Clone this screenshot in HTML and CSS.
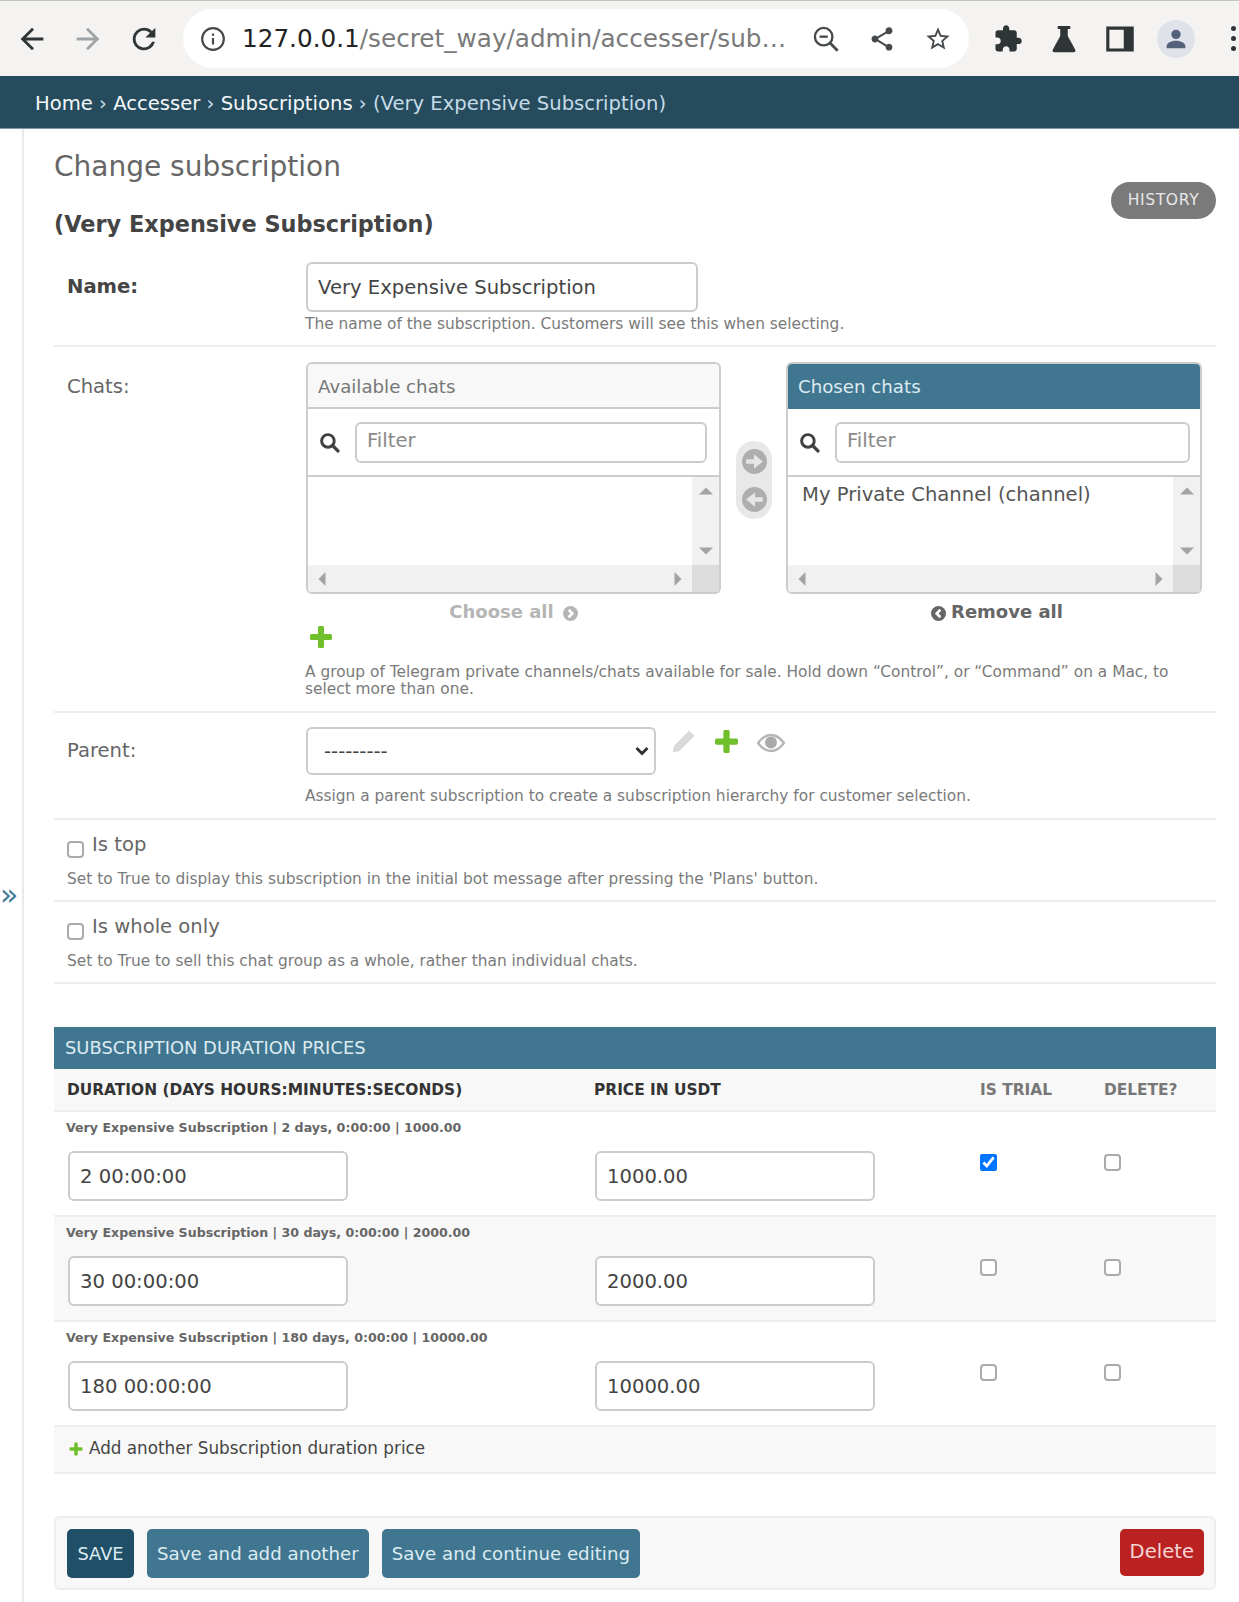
FILE: index.html
```html
<!DOCTYPE html>
<html lang="en">
<head>
  <meta charset="UTF-8" />
  <title>Change subscription</title>
  <link rel="stylesheet" href="styles.css">
</head>
<body>
  <svg class="defs" width="0" height="0" aria-hidden="true">
    <symbol id="plus" viewBox="0 0 24 24"><path d="M9 2.500q0-1.500 1.500-1.500h3q1.500 0 1.500 1.500V9h6.500q1.500 0 1.500 1.500v3q0 1.500-1.500 1.500H15v6.500q0 1.500-1.500 1.500h-3q-1.500 0-1.500-1.500V15H2.500Q1 15 1 13.500v-3Q1 9 2.500 9H9z" fill="#70bf2b"/></symbol>
    <symbol id="search" viewBox="0 0 20 20"><circle cx="8.500" cy="8.500" r="6" fill="none" stroke="#40403e" stroke-width="2.800"/><path d="M13 13l5 5" stroke="#40403e" stroke-width="3.200" stroke-linecap="round"/></symbol>
    <symbol id="circle-right" viewBox="0 0 24 24"><circle cx="12" cy="12" r="12" fill="#aeaeae"/><path d="M4 9.800h7.500V5L20 12l-8.500 7v-4.800H4z" fill="#e6e6e6"/></symbol>
    <symbol id="circle-left" viewBox="0 0 24 24"><circle cx="12" cy="12" r="12" fill="#aeaeae"/><path d="M20 9.800h-7.500V5L4 12l8.500 7v-4.800H20z" fill="#e6e6e6"/></symbol>
    <symbol id="chev-right" viewBox="0 0 24 24"><circle cx="12" cy="12" r="12" fill="currentColor"/><path d="M9 6l6 6-6 6" fill="none" stroke="#fff" stroke-width="4"/></symbol>
    <symbol id="chev-left" viewBox="0 0 24 24"><circle cx="12" cy="12" r="12" fill="currentColor"/><path d="M15 6l-6 6 6 6" fill="none" stroke="#fff" stroke-width="4"/></symbol>
    <symbol id="arrow-up" viewBox="0 0 12 12"><path d="M0 9L6 3l6 6z" fill="#a3a3a3"/></symbol>
    <symbol id="arrow-down" viewBox="0 0 12 12"><path d="M0 3l6 6 6-6z" fill="#a3a3a3"/></symbol>
    <symbol id="arrow-left" viewBox="0 0 12 12"><path d="M9 0L3 6l6 6z" fill="#a3a3a3"/></symbol>
    <symbol id="arrow-right" viewBox="0 0 12 12"><path d="M3 0l6 6-6 6z" fill="#a3a3a3"/></symbol>
  </svg>

  <header class="toolbar">
    <svg class="tb-icon" viewBox="0 0 24 24"><path d="M20 11H7.830l5.590-5.590L12 4l-8 8 8 8 1.410-1.410L7.830 13H20z" fill="#2f3437"/></svg>
    <svg class="tb-icon" viewBox="0 0 24 24"><path d="M4 11h12.170l-5.590-5.590L12 4l8 8-8 8-1.410-1.410L16.170 13H4z" fill="#a0a3a6"/></svg>
    <svg class="tb-icon" viewBox="0 0 24 24"><path d="M17.650 6.350A7.950 7.950 0 0 0 12 4a8 8 0 1 0 7.740 10h-2.080A6 6 0 1 1 12 6c1.660 0 3.140.69 4.220 1.780L13 11h7V4z" fill="#2f3437"/></svg>
    <div class="omnibox">
      <svg class="info-icon" viewBox="0 0 24 24"><circle cx="12" cy="12" r="10" fill="none" stroke="#45494c" stroke-width="2"/><path d="M11 11h2v6h-2zM11 7h2v2h-2z" fill="#45494c"/></svg>
      <span class="url"><b>127.0.0.1</b>/secret_way/admin/accesser/sub…</span>
      <svg class="om-icon" viewBox="0 0 24 24"><circle cx="10" cy="10" r="7.500" fill="none" stroke="#45494c" stroke-width="2"/><path d="M15.500 15.500L22 22" stroke="#45494c" stroke-width="2.400"/><path d="M6.500 9h7v2h-7z" fill="#45494c"/></svg>
      <svg class="om-icon" viewBox="0 0 24 24"><path d="M18 16.080c-.76 0-1.440.3-1.960.77L8.910 12.700c.05-.23.09-.46.09-.7s-.04-.47-.09-.7l7.050-4.110c.54.5 1.250.81 2.040.81 1.660 0 3-1.340 3-3s-1.340-3-3-3-3 1.340-3 3c0 .24.04.47.09.7L8.040 9.810C7.500 9.310 6.790 9 6 9c-1.660 0-3 1.340-3 3s1.340 3 3 3c.79 0 1.500-.31 2.040-.81l7.120 4.160c-.05.21-.08.43-.08.65 0 1.610 1.310 2.920 2.920 2.920s2.920-1.310 2.920-2.920-1.310-2.920-2.920-2.920z" fill="#45494c"/></svg>
      <svg class="om-icon" viewBox="0 0 24 24"><path d="M22 9.240l-7.190-.62L12 2 9.190 8.630 2 9.240l5.460 4.730L5.820 21 12 17.270 18.180 21l-1.630-7.030L22 9.240zM12 15.400l-3.760 2.270 1-4.280-3.320-2.880 4.380-.38L12 6.100l1.710 4.040 4.380.38-3.320 2.880 1 4.280L12 15.400z" fill="#45494c"/></svg>
    </div>
    <div class="tb-right">
      <svg viewBox="0 0 24 24"><path d="M20.500 11H19V7c0-1.100-.9-2-2-2h-4V3.500C13 2.120 11.880 1 10.500 1S8 2.120 8 3.500V5H4c-1.100 0-1.990.9-1.990 2v3.800H3.500c1.490 0 2.700 1.210 2.700 2.700s-1.210 2.700-2.700 2.700H2V20c0 1.100.9 2 2 2h3.800v-1.500c0-1.490 1.210-2.700 2.700-2.700 1.490 0 2.700 1.210 2.700 2.700V22H17c1.100 0 2-.9 2-2v-4h1.500c1.380 0 2.500-1.120 2.500-2.500S21.880 11 20.500 11z" fill="#2f3437"/></svg>
      <svg viewBox="0 0 24 24"><path d="M7 1.500h10v2.500h-2v5.500l6 11q.6 2-1.500 2h-15q-2.100 0-1.500-2l6-11V4H7z" fill="#2f3437"/></svg>
      <svg viewBox="0 0 24 24"><path d="M1 2h22v20H1zM3.500 4.500v15H15v-15z" fill="#2f3437" fill-rule="evenodd"/></svg>
      <span class="avatar"><svg viewBox="0 0 24 24"><circle cx="12" cy="8" r="4" fill="#53627a"/><path d="M4 20v-2c0-3 5-4.500 8-4.500s8 1.500 8 4.500v2z" fill="#53627a"/></svg></span>
      <span class="dots"><i></i><i></i><i></i></span>
    </div>
  </header>

  <nav class="breadcrumbs">
    <a>Home</a> › <a>Accesser</a> › <a>Subscriptions</a> › (Very Expensive Subscription)
  </nav>

  <div class="layout">
    <div class="nav-toggle">»</div>
    <main class="content">
      <div class="page-head">
        <div>
          <h1>Change subscription</h1>
          <h2>(Very Expensive Subscription)</h2>
        </div>
        <a class="history">HISTORY</a>
      </div>

      <div class="form-row name-row">
        <label class="field-label required">Name:</label>
        <div class="field-box">
          <input class="text-input name-input" value="Very Expensive Subscription">
          <div class="help">The name of the subscription. Customers will see this when selecting.</div>
        </div>
      </div>

      <div class="form-row chats-row">
        <label class="field-label">Chats:</label>
        <div class="field-box">
          <div class="selector">
            <div class="sel-box">
              <div class="sel-title">Available chats</div>
              <div class="sel-filter">
                <svg class="sel-search"><use href="#search"/></svg>
                <input class="text-input filter-input" placeholder="Filter">
              </div>
              <div class="sel-list">
                <div class="sel-items"></div>
                <div class="vscroll"><svg><use href="#arrow-up"/></svg><svg><use href="#arrow-down"/></svg></div>
                <div class="hscroll"><svg><use href="#arrow-left"/></svg><svg><use href="#arrow-right"/></svg></div>
                <div class="corner"></div>
              </div>
            </div>
            <div class="sel-move">
              <svg><use href="#circle-right"/></svg>
              <svg><use href="#circle-left"/></svg>
            </div>
            <div class="sel-box chosen">
              <div class="sel-title">Chosen chats</div>
              <div class="sel-filter">
                <svg class="sel-search"><use href="#search"/></svg>
                <input class="text-input filter-input" placeholder="Filter">
              </div>
              <div class="sel-list">
                <div class="sel-items">My Private Channel (channel)</div>
                <div class="vscroll"><svg><use href="#arrow-up"/></svg><svg><use href="#arrow-down"/></svg></div>
                <div class="hscroll"><svg><use href="#arrow-left"/></svg><svg><use href="#arrow-right"/></svg></div>
                <div class="corner"></div>
              </div>
            </div>
          </div>
          <div class="sel-actions">
            <a class="choose-all">Choose all<svg viewBox="0 0 24 24"><use href="#chev-right"/></svg></a>
            <a class="remove-all"><svg viewBox="0 0 24 24"><use href="#chev-left"/></svg>Remove all</a>
          </div>
          <svg class="add-icon"><use href="#plus"/></svg>
          <div class="help chats-help">A group of Telegram private channels/chats available for sale. Hold down “Control”, or “Command” on a Mac, to select more than one.</div>
        </div>
      </div>

      <div class="form-row parent-row">
        <label class="field-label">Parent:</label>
        <div class="field-box">
          <div class="parent-wrap">
            <div class="parent-select">---------<svg viewBox="0 0 16 16"><path d="M2.500 5L8 10.500 13.500 5" fill="none" stroke="#2f2f2f" stroke-width="2.800"/></svg></div>
            <div class="related">
              <svg viewBox="0 0 24 24"><path d="M17.500 1.500l5 5L8 21l-6.500 1.500L3 16z" fill="#d9d9d9"/></svg>
              <svg viewBox="0 0 24 24"><use href="#plus"/></svg>
              <svg class="eye" viewBox="0 0 28 20"><path d="M1 10Q7 2 14 2t13 8q-6 8-13 8T1 10z" fill="none" stroke="#b5b5b5" stroke-width="2.400"/><circle cx="14" cy="9.500" r="6" fill="#aaa"/></svg>
            </div>
          </div>
          <div class="help parent-help">Assign a parent subscription to create a subscription hierarchy for customer selection.</div>
        </div>
      </div>

      <div class="form-row check-row">
        <div class="check-line"><input type="checkbox"><label>Is top</label></div>
        <div class="help check-help">Set to True to display this subscription in the initial bot message after pressing the 'Plans' button.</div>
      </div>

      <div class="form-row check-row">
        <div class="check-line"><input type="checkbox"><label>Is whole only</label></div>
        <div class="help check-help">Set to True to sell this chat group as a whole, rather than individual chats.</div>
      </div>

      <section class="inline-group">
        <h2 class="inline-title">SUBSCRIPTION DURATION PRICES</h2>
        <table class="prices">
          <thead>
            <tr>
              <th class="col-duration">DURATION (DAYS HOURS:MINUTES:SECONDS)</th>
              <th class="col-price">PRICE IN USDT</th>
              <th class="col-trial">IS TRIAL</th>
              <th class="col-delete">DELETE?</th>
            </tr>
          </thead>
          <tbody>
            <tr class="row-label"><td colspan="4">Very Expensive Subscription | 2 days, 0:00:00 | 1000.00</td></tr>
            <tr class="row-fields">
              <td><input class="text-input cell-input" value="2 00:00:00"></td>
              <td><input class="text-input cell-input" value="1000.00"></td>
              <td><input type="checkbox" checked></td>
              <td><input type="checkbox"></td>
            </tr>
            <tr class="row-label alt"><td colspan="4">Very Expensive Subscription | 30 days, 0:00:00 | 2000.00</td></tr>
            <tr class="row-fields alt">
              <td><input class="text-input cell-input" value="30 00:00:00"></td>
              <td><input class="text-input cell-input" value="2000.00"></td>
              <td><input type="checkbox"></td>
              <td><input type="checkbox"></td>
            </tr>
            <tr class="row-label"><td colspan="4">Very Expensive Subscription | 180 days, 0:00:00 | 10000.00</td></tr>
            <tr class="row-fields">
              <td><input class="text-input cell-input" value="180 00:00:00"></td>
              <td><input class="text-input cell-input" value="10000.00"></td>
              <td><input type="checkbox"></td>
              <td><input type="checkbox"></td>
            </tr>
            <tr class="add-row">
              <td colspan="4"><svg><use href="#plus"/></svg>Add another Subscription duration price</td>
            </tr>
          </tbody>
        </table>
      </section>

      <div class="submit-row">
        <a class="btn btn-default">SAVE</a>
        <a class="btn">Save and add another</a>
        <a class="btn">Save and continue editing</a>
        <a class="btn btn-delete">Delete</a>
      </div>
    </main>
  </div>
</body>
</html>
```
FILE: styles.css
```css
* {
  box-sizing: border-box;
}
html, body {
  margin: 0;
  padding: 0;
}
body {
  height: 1602px;
  overflow: hidden;
  background: #fff;
  color: #444;
  font-family: "DejaVu Sans", sans-serif;
  font-size: 19.6px;
}
.defs {
  position: absolute;
}
h1, h2 {
  margin: 0;
}

/* browser bar */
.toolbar {
  height: 76px;
  display: flex;
  align-items: center;
  background: #f4f3f1;
  padding: 0 0 0 15px;
  border-top: 1px solid #c4c4c2;
}
.tb-icon {
  width: 34px;
  height: 34px;
  flex: none;
  margin-right: 22px;
}
.omnibox {
  width: 786px;
  height: 59px;
  border-radius: 30px;
  background: #fff;
  display: flex;
  align-items: center;
  padding: 0 0 0 17px;
  flex: none;
}
.info-icon {
  width: 26px;
  height: 26px;
  flex: none;
  margin-right: 16px;
}
.om-icon {
  width: 28px;
  height: 28px;
  flex: none;
  margin-right: 28px;
}
.om-icon:last-child {
  margin-right: 0;
}
.url {
  font-size: 24.7px;
  color: #7a7a7a;
  width: 570px;
  white-space: nowrap;
  overflow: hidden;
  flex: none;
}
.url b {
  font-weight: normal;
  color: #222;
}
.tb-right {
  display: flex;
  align-items: center;
  margin-left: 24px;
}
.tb-right > svg {
  width: 30px;
  height: 30px;
  flex: none;
  margin-right: 26px;
}
.avatar {
  width: 38px;
  height: 38px;
  border-radius: 50%;
  background: #dfe2e8;
  display: flex;
  align-items: center;
  justify-content: center;
  margin-left: -4px;
}
.avatar svg {
  width: 28px;
  height: 28px;
}
.dots {
  display: flex;
  flex-direction: column;
  gap: 5px;
  margin-left: 36px;
}
.dots i {
  width: 5px;
  height: 5px;
  border-radius: 50%;
  background: #2f3437;
}

.breadcrumbs {
  height: 53px;
  line-height: 55px;
  background: #264b5d;
  color: #c4dce8;
  padding-left: 35px;
  white-space: nowrap;
  border-bottom: 1px solid #7d9aa8;
  overflow: hidden;
}
.breadcrumbs a {
  color: #f4f8fa;
}

.layout {
  display: flex;
}
.nav-toggle {
  width: 24px;
  height: 1473px;
  flex: none;
  border-right: 2px solid #eaeaea;
  color: #447e9b;
  font-size: 30px;
  padding-top: 751px;
  line-height: 1;
}
.content {
  flex: 1;
  padding: 0 23px 0 30px;
  min-width: 0;
}

.page-head {
  height: 118px;
  display: flex;
  justify-content: space-between;
  align-items: flex-start;
}
.page-head h1 {
  font-size: 28px;
  font-weight: normal;
  color: #666;
  line-height: 32px;
  margin-top: 22px;
}
.page-head h2 {
  font-size: 22.4px;
  font-weight: bold;
  color: #444;
  line-height: 28px;
  margin-top: 27px;
}
.history {
  margin-top: 53px;
  width: 105px;
  height: 37px;
  line-height: 37px;
  text-align: center;
  border-radius: 19px;
  background: #7a7a7a;
  color: #e8e8e8;
  font-size: 15.6px;
  letter-spacing: 0.6px;
}

/* form rows */
.form-row {
  display: flex;
  padding: 15px 13px 0;
  border-bottom: 2px solid #eee;
}
.name-row {
  height: 100px;
}
.field-label {
  width: 239px;
  flex: none;
  color: #666;
  line-height: 28px;
  padding-top: 11px;
}
.field-label.required {
  color: #444;
  font-weight: bold;
  padding-top: 11px;
}
.parent-row .field-label {
  padding-top: 10px;
}
.field-box {
  flex: 1;
  min-width: 0;
}
.text-input {
  border: 2px solid #ccc;
  border-radius: 6px;
  background: #fff;
  font-family: inherit;
  font-size: 19.6px;
  color: #444;
  padding: 0 10px;
  outline: none;
}
.text-input::placeholder {
  color: #8a8a8a;
  opacity: 1;
}
.name-input {
  width: 392px;
  height: 50px;
  display: block;
}
.help {
  color: #7a7a7a;
  font-size: 15.4px;
  line-height: 18px;
  margin-left: -1px;
}
.name-row .help {
  padding-top: 3px;
}

/* chats selector */
.chats-row {
  height: 366px;
}
.selector {
  display: flex;
  align-items: flex-start;
}
.sel-box {
  width: 415px;
  height: 232px;
  border: 2px solid #ccc;
  border-radius: 6px;
  overflow: hidden;
  flex: none;
  display: flex;
  flex-direction: column;
}
.sel-title {
  height: 45px;
  line-height: 46px;
  background: #f8f8f8;
  border-bottom: 2px solid #ccc;
  color: #777;
  padding-left: 10px;
  font-size: 18.2px;
  flex: none;
}
.chosen {
  width: 416px;
}
.chosen .sel-title {
  background: #417690;
  border-bottom-color: #417690;
  color: #dcebf2;
}
.sel-filter {
  height: 68px;
  display: flex;
  align-items: center;
  padding-left: 11px;
  border-bottom: 2px solid #ccc;
  flex: none;
}
.sel-search {
  width: 21px;
  height: 21px;
  flex: none;
  margin-right: 15px;
}
.filter-input {
  width: 352px;
  height: 41px;
  display: block;
  padding-bottom: 3px;
}
.chosen .filter-input {
  width: 355px;
}
.sel-list {
  flex: 1;
  display: grid;
  grid-template-columns: 1fr 27px;
  grid-template-rows: 1fr 27px;
  min-height: 0;
}
.sel-items {
  padding: 5px 14px;
  line-height: 26px;
  color: #555;
  white-space: nowrap;
}
.vscroll {
  background: #f1f1f1;
  display: flex;
  flex-direction: column;
  justify-content: space-between;
  align-items: center;
  padding: 7px 0;
}
.vscroll svg, .hscroll svg {
  width: 14px;
  height: 14px;
}
.hscroll {
  background: #f1f1f1;
  display: flex;
  justify-content: space-between;
  align-items: center;
  padding: 0 7px;
}
.corner {
  background: #dcdcdc;
}
.sel-move {
  width: 36px;
  height: 78px;
  margin: 79px 14px 0 15px;
  flex: none;
  border-radius: 18px;
  background: #e8e8e8;
  display: flex;
  flex-direction: column;
  align-items: center;
  justify-content: center;
  gap: 13px;
}
.sel-move svg {
  width: 25px;
  height: 25px;
}
.sel-actions {
  display: flex;
  font-size: 18px;
  font-weight: bold;
  height: 36px;
  line-height: 36px;
}
.sel-actions svg {
  width: 15px;
  height: 15px;
  vertical-align: -3px;
}
.choose-all {
  width: 415px;
  text-align: center;
  color: #b5b5b5;
  flex: none;
}
.choose-all svg {
  margin-left: 9px;
}
.remove-all {
  width: 416px;
  margin-left: 68px;
  text-align: center;
  color: #666;
  flex: none;
}
.remove-all svg {
  margin-right: 5px;
}
.add-icon {
  display: block;
  width: 24px;
  height: 24px;
  margin: -5px 0 0 3px;
}
.chats-help {
  margin-top: 15px;
  line-height: 17px;
}

/* parent */
.parent-row {
  height: 107px;
  padding-top: 14px;
}
.parent-wrap {
  display: flex;
  align-items: flex-start;
}
.parent-select {
  width: 350px;
  height: 48px;
  border: 2px solid #ccc;
  border-radius: 6px;
  display: flex;
  align-items: center;
  justify-content: space-between;
  padding: 0 4px 0 16px;
  color: #444;
  flex: none;
}
.parent-select svg {
  width: 16px;
  height: 16px;
}
.related {
  display: flex;
  align-items: center;
  gap: 18px;
  margin-left: 15px;
  padding-top: 2px;
}
.related svg {
  width: 25px;
  height: 25px;
}
.related .eye {
  width: 28px;
  height: 22px;
  margin-top: 2px;
}
.parent-help {
  margin-top: 12px;
}

/* checkboxes */
.check-row {
  display: block;
  height: 82px;
  padding-top: 21px;
}
.check-line {
  display: flex;
  align-items: flex-start;
  height: 24px;
}
input[type="checkbox"] {
  width: 17px;
  height: 17px;
  margin: 0;
}
input[type="checkbox"]:not(:checked) {
  appearance: none;
  background: #fff;
  border: 2px solid #aaa;
  border-radius: 4px;
}
.check-line label {
  margin-left: 8px;
  color: #666;
  line-height: 22px;
  margin-top: -7px;
}
.check-help {
  margin: 5px 0 0;
}

/* inline table */
.inline-group {
  margin-top: 43px;
}
.inline-title {
  height: 42px;
  line-height: 42px;
  background: #417690;
  color: #dcebf2;
  font-size: 17.9px;
  font-weight: normal;
  padding-left: 11px;
}
.prices {
  width: 100%;
  border-collapse: collapse;
  table-layout: fixed;
}
.prices th {
  height: 42px;
  background: #f8f8f8;
  border-bottom: 2px solid #eee;
  text-align: left;
  font-size: 15.4px;
  color: #333;
  padding: 0 0 0 13px;
}
.col-duration {
  width: 527px;
}
.col-price {
  width: 386px;
}
.col-trial {
  width: 124px;
}
.prices th.col-trial, .prices th.col-delete {
  color: #777;
}
.row-label td {
  font-size: 12.6px;
  font-weight: bold;
  color: #666;
  height: 38px;
  padding: 0 0 6px 12px;
}
.row-fields td {
  height: 67px;
  vertical-align: top;
  padding: 2px 0 0 14px;
  border-bottom: 2px solid #eee;
}
.row-fields td:nth-child(n+3) {
  padding: 4px 0 0 13px;
}
.alt td {
  background: #f8f8f8;
}
.cell-input {
  width: 280px;
  height: 50px;
  display: block;
}
.add-row td {
  height: 47px;
  background: #f8f8f8;
  border-bottom: 2px solid #eee;
  padding: 0 0 4px 15px;
  font-size: 16.8px;
  color: #444;
}
.add-row svg {
  width: 14px;
  height: 14px;
  margin-right: 6px;
  vertical-align: -2px;
}

/* submit */
.submit-row {
  margin-top: 42px;
  height: 74px;
  border: 2px solid #eee;
  border-radius: 6px;
  background: #f8f8f8;
  display: flex;
  align-items: flex-start;
  gap: 13px;
  padding: 11px 10px 0 11px;
}
.btn {
  height: 49px;
  line-height: 49px;
  padding: 0 10px;
  border-radius: 5px;
  background: #417690;
  color: #dcebf2;
  font-size: 18.2px;
  white-space: nowrap;
}
.btn-default {
  background: #205067;
  font-size: 17.8px;
  padding: 0 10.5px;
}
.btn-delete {
  margin-left: auto;
  background: #ba2121;
  height: 47px;
  line-height: 46px;
  font-size: 19.6px;
  color: #f3d5d5;
}
```
